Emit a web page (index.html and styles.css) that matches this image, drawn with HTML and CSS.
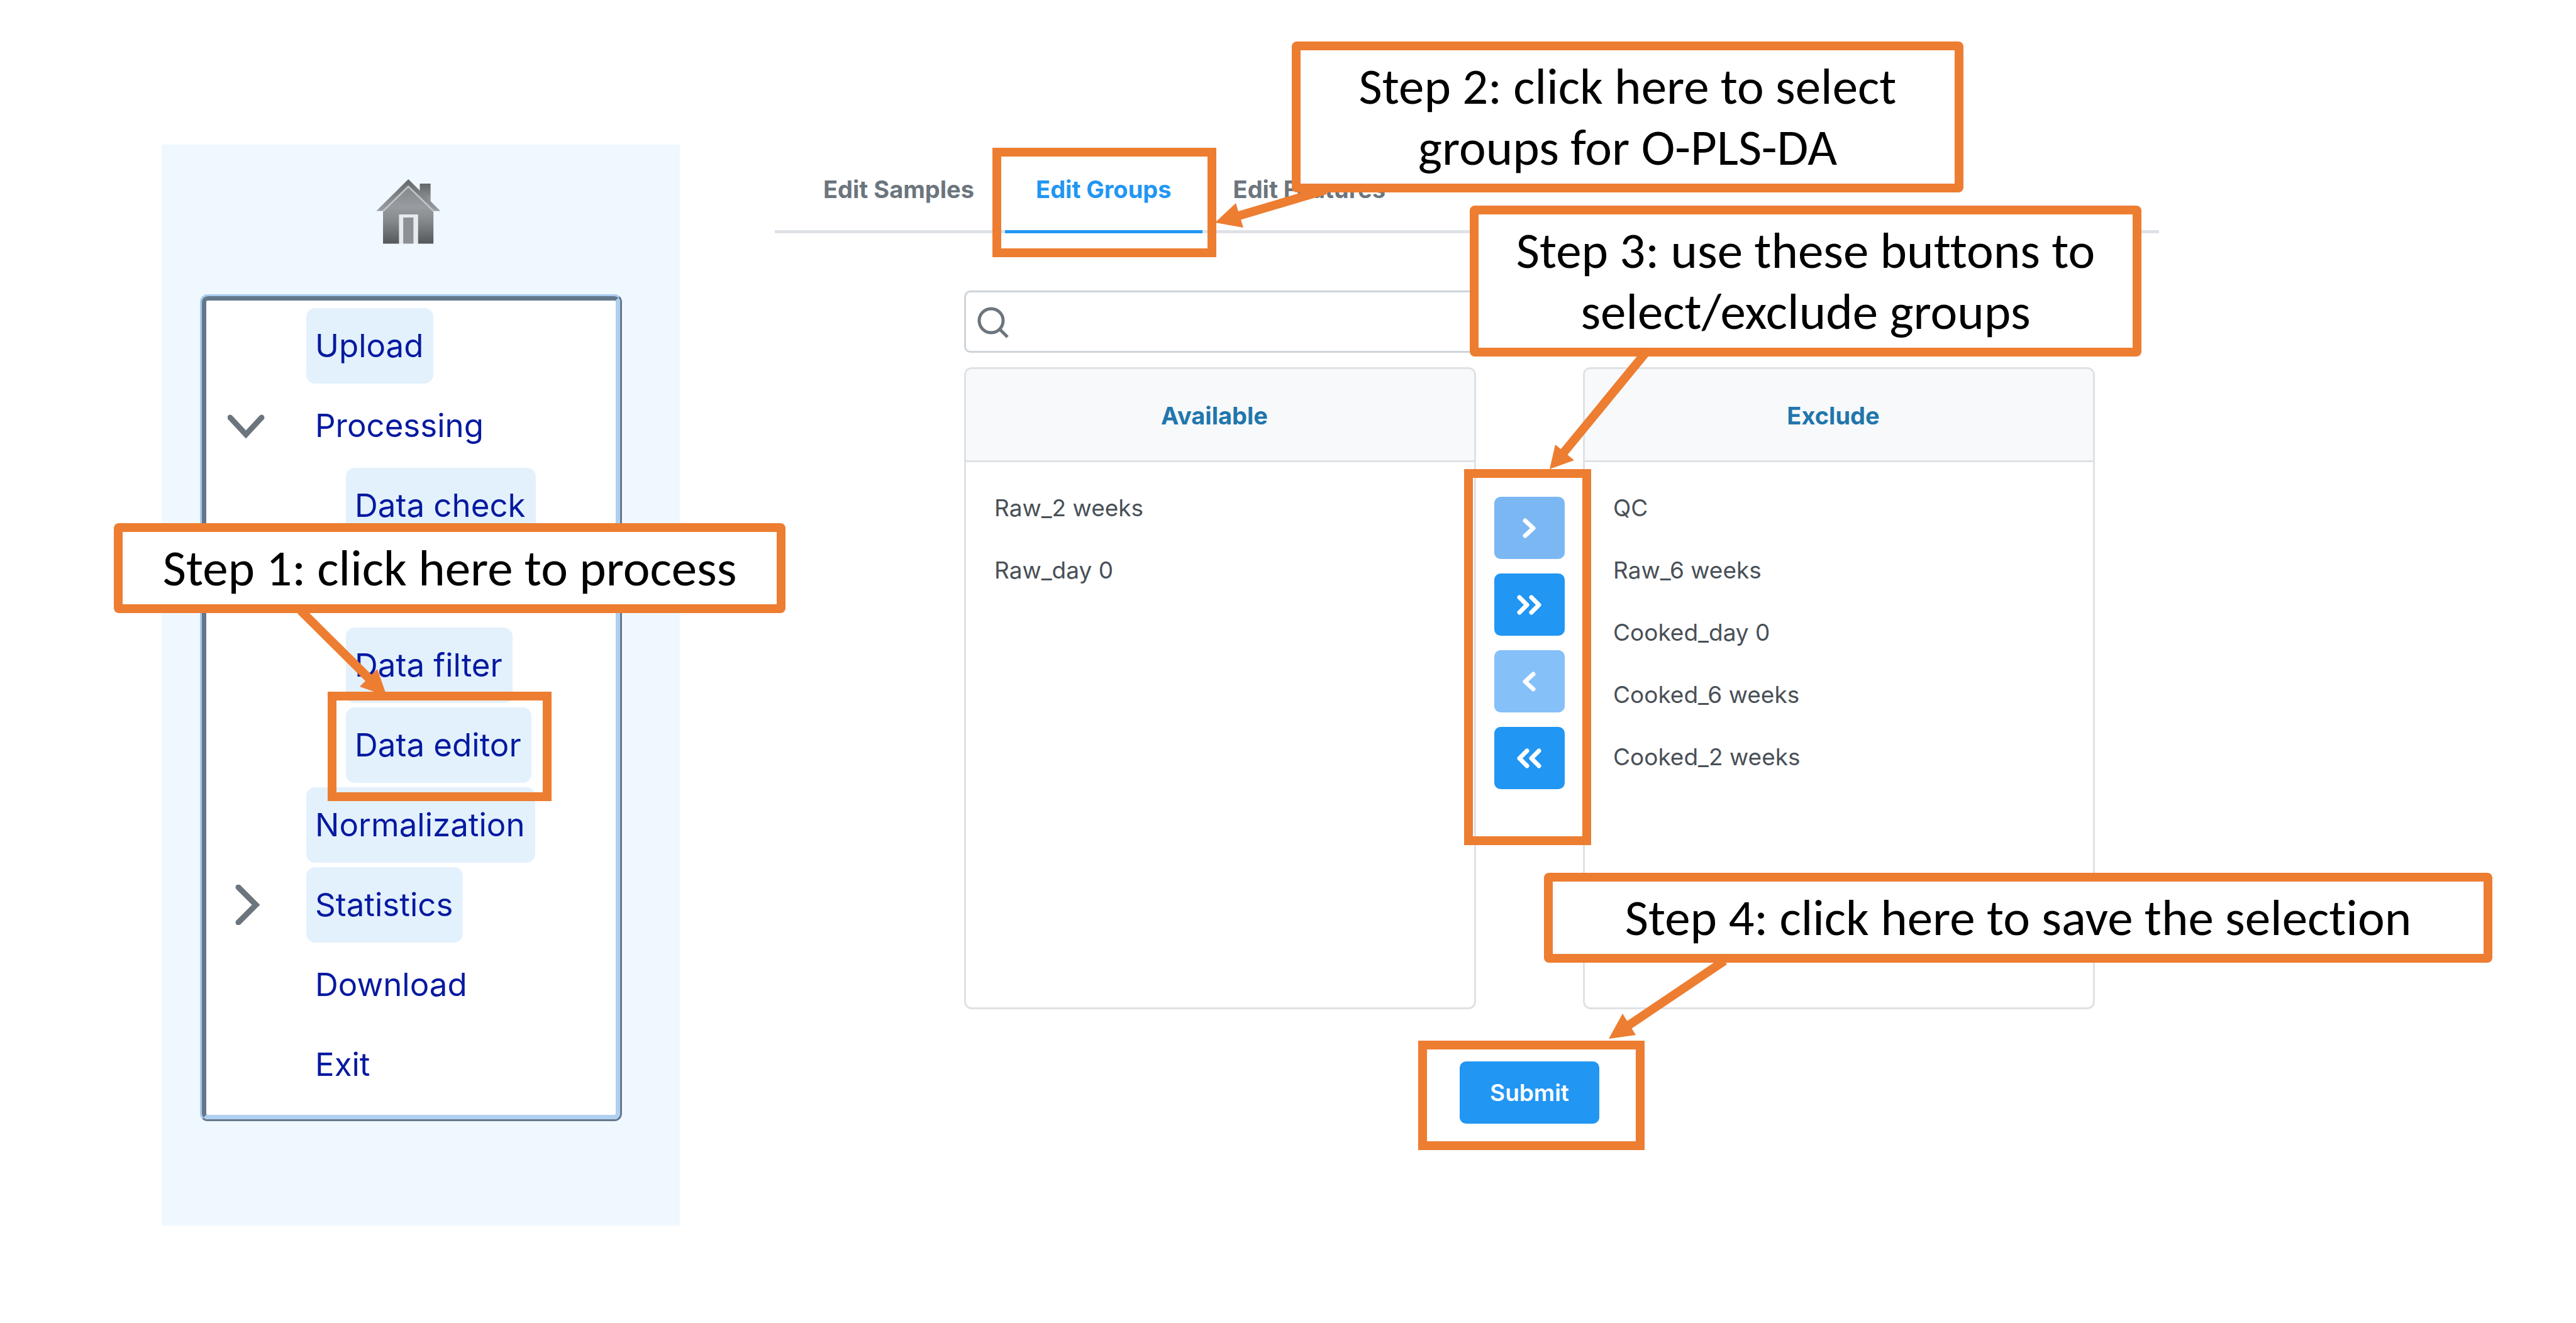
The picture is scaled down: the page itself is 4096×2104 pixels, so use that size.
FILE: index.html
```html
<!DOCTYPE html>
<html lang="en">
<head>
<meta charset="utf-8">
<title>Data editor: select groups for O-PLS-DA</title>
<link rel="stylesheet" href="styles.css">
</head>
<body>
<div class="page">
  <aside class="sidebar">
    <a class="home" href="#home" aria-label="Home">
      <svg width="111" height="105" viewBox="95 60 342 322" aria-hidden="true">
        <defs>
          <linearGradient id="roof" x1="0" y1="0" x2="0" y2="1">
            <stop offset="0" stop-color="#626669"/>
            <stop offset="1" stop-color="#9a9fa3"/>
          </linearGradient>
          <linearGradient id="wall" x1="0" y1="0" x2="0" y2="1">
            <stop offset="0" stop-color="#83878a"/>
            <stop offset="0.35" stop-color="#989ca0"/>
            <stop offset="0.6" stop-color="#85898c"/>
            <stop offset="1" stop-color="#55585a"/>
          </linearGradient>
        </defs>
        <path d="M309 84H362V182L309 130Z" fill="url(#roof)"/>
        <path d="M253 62L410 218H372L253 98L134 218H96Z" fill="url(#roof)"/>
        <path d="M253 100L376 222V378H300V236H208V378H129V222Z" fill="url(#wall)"/>
        <path d="M128 220L253 98L378 220" fill="none" stroke="#c3c7cb" stroke-width="8"/>
        <path d="M208 378V236H300V378" fill="#e6ebf1"/>
        <path d="M228 250H278V378H228Z" fill="#8d9195"/>
      </svg>
    </a>
    <nav class="tree" aria-label="Workflow">
      <ul class="tree-list">
        <li class="row"><span class="toggle"></span><a class="node node-on" href="#upload">Upload</a></li>
        <li class="row">
          <button class="toggle" type="button" aria-label="Collapse Processing"><svg width="60" height="64" viewBox="0 0 60 64" aria-hidden="true"><path d="M4 19L29 46L54 19"/></svg></button>
          <a class="node" href="#processing">Processing</a>
        </li>
        <li class="row row-child"><span class="toggle"></span><a class="node node-on" href="#check">Data check</a></li>
        <li class="row row-child row-covered"><span class="toggle"></span></li>
        <li class="row row-child"><span class="toggle"></span><a class="node node-on" href="#filter">Data filter</a></li>
        <li class="row row-child"><span class="toggle"></span><a class="node node-on marked mark-editor" href="#editor">Data editor</a></li>
        <li class="row"><span class="toggle"></span><a class="node node-on" href="#normalization">Normalization</a></li>
        <li class="row">
          <button class="toggle" type="button" aria-label="Expand Statistics"><svg width="60" height="64" viewBox="0 0 60 64" aria-hidden="true"><path d="M17 4L45 32L17 60"/></svg></button>
          <a class="node node-on" href="#statistics">Statistics</a>
        </li>
        <li class="row"><span class="toggle"></span><a class="node" href="#download">Download</a></li>
        <li class="row"><span class="toggle"></span><a class="node" href="#exit">Exit</a></li>
      </ul>
    </nav>
    <div class="callout callout-1">Step 1: click here to process
      <svg class="arrow" width="136" height="136" aria-hidden="true"><path class="shaft" d="M-4 -4L114 113"/><path class="head" d="M133 132L118 89L90 117Z"/></svg>
    </div>
  </aside>

  <main class="editor">
    <div class="tabs" role="tablist">
      <button class="tab" type="button" role="tab">Edit Samples</button>
      <button class="tab tab-active marked mark-tab" type="button" role="tab" aria-selected="true">Edit Groups</button>
      <button class="tab" type="button" role="tab">Edit Features</button>
    </div>
    <form class="picker" onsubmit="return false">
      <div class="search">
        <svg class="search-icon" width="50" height="50" viewBox="0 0 50 50" aria-hidden="true"><circle cx="22" cy="22" r="19"/><path d="M35 35L48 48"/></svg>
        <input class="search-input" type="text" aria-label="Search groups">
      </div>
      <div class="lists">
        <section class="panel">
          <h2 class="panel-title">Available</h2>
          <ul class="items">
            <li>Raw_2 weeks</li>
            <li>Raw_day 0</li>
          </ul>
        </section>
        <div class="moves marked mark-moves">
          <button class="move move-dim" type="button" aria-label="Exclude selected"><svg width="40" height="32" viewBox="0 0 40 32" aria-hidden="true"><path d="M13 4L26 16L13 28"/></svg></button>
          <button class="move" type="button" aria-label="Exclude all"><svg width="40" height="32" viewBox="0 0 40 32" aria-hidden="true"><path d="M4 4L16 16L4 28M23 4L35 16L23 28"/></svg></button>
          <button class="move move-off" type="button" aria-label="Restore selected"><svg width="40" height="32" viewBox="0 0 40 32" aria-hidden="true"><path d="M26 4L13 16L26 28"/></svg></button>
          <button class="move" type="button" aria-label="Restore all"><svg width="40" height="32" viewBox="0 0 40 32" aria-hidden="true"><path d="M16 4L4 16L16 28M35 4L23 16L35 28"/></svg></button>
        </div>
        <section class="panel">
          <h2 class="panel-title">Exclude</h2>
          <ul class="items">
            <li>QC</li>
            <li>Raw_6 weeks</li>
            <li>Cooked_day 0</li>
            <li>Cooked_6 weeks</li>
            <li>Cooked_2 weeks</li>
          </ul>
        </section>
      </div>
      <button class="submit marked mark-submit" type="submit">Submit</button>
    </form>
    <div class="callout callout-2">Step 2: click here to select<br>groups for O-PLS-DA
      <svg class="arrow" width="180" height="60" aria-hidden="true"><path class="shaft" d="M176 -4L28 40"/><path class="head" d="M0 48L33 17L45 56Z"/></svg>
    </div>
    <div class="callout callout-3">Step 3: use these buttons to<br>select/exclude groups
      <svg class="arrow" width="160" height="180" aria-hidden="true"><path class="shaft" d="M152 -4L19 158"/><path class="head" d="M1 179L10 140L40 165Z"/></svg>
    </div>
    <div class="callout callout-4">Step 4: click here to save the selection
      <svg class="arrow" width="190" height="124" aria-hidden="true"><path class="shaft" d="M185 -3L26 104"/><path class="head" d="M1 121L23 81L44 115Z"/></svg>
    </div>
  </main>
</div>
</body>
</html>
```

FILE: styles.css
```css
:root {
  --accent: #ed7d31;
  --blue: #2196f3;
  --line: #dee2e6;
  --muted: #6c757d;
}

* {
  box-sizing: border-box;
}

body {
  margin: 0;
  background: #fff;
  font-family: Inter, "Liberation Sans", sans-serif;
  font-size: 37px;
  line-height: 44px;
}

ul {
  margin: 0;
  padding: 0;
  list-style: none;
}

button {
  border: 0;
  padding: 0;
  background: none;
  font: inherit;
  color: inherit;
}

.page {
  display: flex;
  align-items: flex-start;
  gap: 151px;
  min-height: 100vh;
  padding: 230px 663px 155px 257px;
}

/* Sidebar */

.sidebar {
  position: relative;
  flex: 0 0 824px;
  padding: 54px 92px 166px 61px;
  background: #f0f8ff;
}

.home {
  display: flex;
  justify-content: center;
  margin-bottom: 79px;
}

.tree {
  border: 3px solid;
  border-color: #a9cbec #64788c #64788c #a9cbec;
  border-radius: 12px;
  background: #fff;
}

.tree-list {
  display: flex;
  flex-direction: column;
  gap: 7px;
  padding: 12px 0 20px;
  border: 7px solid;
  border-color: #64788c #afd0f0 #afd0f0 #64788c;
  border-radius: 9px;
}

.row {
  display: flex;
  height: 120px;
}

.toggle {
  display: flex;
  flex: 0 0 159px;
  align-items: center;
  padding-left: 34px;
}

.toggle path {
  fill: none;
  stroke: var(--muted);
  stroke-width: 9;
  stroke-linecap: round;
}

.row-child .toggle {
  flex-basis: 222px;
}

.node {
  display: flex;
  align-items: center;
  padding: 0 16px 0 14px;
  border-radius: 14px;
  color: #0519a0;
  font-size: 51px;
  text-decoration: none;
}

.node-on {
  background: #e3f1fd;
}

/* Tabs */

.editor {
  position: relative;
  flex: 1;
  min-width: 0;
}

.tabs {
  display: flex;
  padding-left: 28px;
  box-shadow: inset 0 -5px var(--line);
}

.tab {
  padding: 49px 49px 43px;
  border-bottom: 5px solid transparent;
  color: var(--muted);
  font-size: 38px;
  font-weight: 700;
}

.tab-active {
  border-color: var(--blue);
  color: var(--blue);
}

/* Pick list */

.picker {
  display: flex;
  flex-direction: column;
  margin: 91px 102px 0 301px;
}

.search {
  display: flex;
  align-items: center;
  gap: 20px;
  height: 99px;
  margin-bottom: 23px;
  padding: 2px 18px 0;
  border: 3px solid #ced4da;
  border-radius: 10px;
}

.search-icon {
  fill: none;
  stroke: var(--muted);
  stroke-width: 5;
}

.search-input {
  flex: 1;
  border: 0;
  outline: 0;
  background: none;
  font: inherit;
}

.lists {
  display: flex;
  gap: 29px;
}

.panel {
  flex: 1;
  min-height: 1021px;
  border: 3px solid var(--line);
  border-radius: 12px;
}

.panel-title {
  margin: 0;
  padding: 52px 18px 49px 0;
  border-bottom: 3px solid var(--line);
  border-radius: 9px 9px 0 0;
  background: #f8f9fb;
  color: #2176ab;
  font-size: 38px;
  font-weight: 700;
  text-align: center;
}

.items {
  padding: 24px 45px;
  color: #495057;
}

.items li {
  padding: 27px 0 28px;
}

.moves {
  display: flex;
  flex-direction: column;
  align-self: flex-start;
  gap: 23px;
  margin-top: 206px;
}

.move {
  display: flex;
  align-items: center;
  justify-content: center;
  width: 112px;
  height: 99px;
  border-radius: 10px;
  background: var(--blue);
}

.move-dim {
  background: #7bb8f3;
}

.move-off {
  background: #85c0f9;
}

.move path {
  fill: none;
  stroke: #fff;
  stroke-width: 7;
  stroke-linecap: round;
  stroke-linejoin: round;
}

.submit {
  align-self: center;
  height: 99px;
  margin-top: 83px;
  padding: 0 48px;
  border-radius: 10px;
  background: var(--blue);
  color: #fff;
  font-weight: 600;
}

/* Tutorial annotations */

.marked {
  position: relative;
}

.marked::after {
  content: "";
  position: absolute;
  border: 14px solid var(--accent);
  pointer-events: none;
}

.mark-editor::after {
  inset: -25px -32px -29px -29px;
}

.mark-tab::after {
  inset: 5px -22px -43px -20px;
}

.mark-moves::after {
  inset: -44px -42px -89px -48px;
}

.mark-submit::after {
  inset: -33px -72px -42px -66px;
}

.callout {
  position: absolute;
  padding: 9px 0;
  border: 14px solid var(--accent);
  border-radius: 8px;
  background: #fff;
  color: #000;
  font-family: Calibri, Carlito, Lato, sans-serif;
  font-size: 81px;
  font-variant-ligatures: none;
  line-height: 97px;
  text-align: center;
  white-space: nowrap;
}

.callout-1 {
  top: 602px;
  left: -76px;
  width: 1068px;
}

.callout-2 {
  top: -164px;
  left: 822px;
  width: 1068px;
}

.callout-3 {
  top: 97px;
  left: 1105px;
  width: 1068px;
}

.callout-4 {
  top: 1158px;
  left: 1223px;
  width: 1508px;
}

.arrow {
  position: absolute;
  top: calc(100% + 14px);
  overflow: visible;
}

.callout-1 .arrow {
  left: 287px;
}

.callout-2 .arrow {
  left: -136px;
}

.callout-3 .arrow {
  left: 112px;
}

.callout-4 .arrow {
  left: 88px;
}

.shaft {
  stroke: var(--accent);
  stroke-width: 14;
}

.head {
  fill: var(--accent);
}
```
